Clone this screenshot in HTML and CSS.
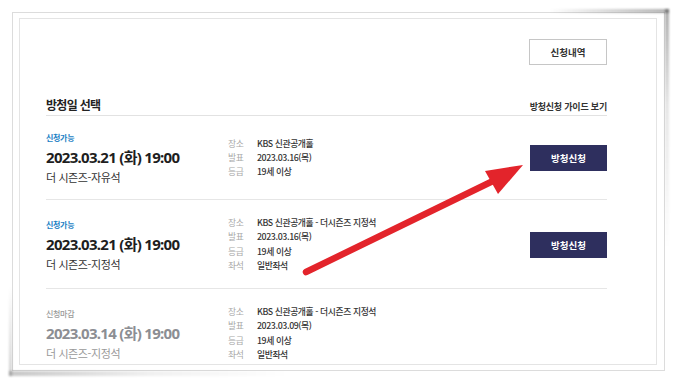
FILE: index.html
```html
<!DOCTYPE html>
<html lang="ko">
<head>
<meta charset="utf-8">
<link rel="stylesheet" href="styles.css">
</head>
<body>
<div class="frame">
  <span class="shadow shadow-top"></span>
  <span class="shadow shadow-right"></span>
  <span class="shadow shadow-bottom"></span>
  <span class="shadow shadow-left"></span>
  <div class="inner">
    <div class="content">
      <div class="top-bar">
        <button class="btn-history">신청내역</button>
      </div>
      <div class="section-head">
        <h2 class="section-title">방청일 선택</h2>
        <a class="guide-link">방청신청 가이드 보기</a>
      </div>

      <div class="row">
        <div class="when">
          <div class="status">신청가능</div>
          <div class="date">2023.03.21 (화) 19:00</div>
          <div class="seat">더 시즌즈-자유석</div>
        </div>
        <dl class="info">
          <dt>장소</dt><dd>KBS 신관공개홀</dd>
          <dt>발표</dt><dd>2023.03.16(목)</dd>
          <dt>등급</dt><dd>19세 이상</dd>
        </dl>
        <button class="btn-apply">방청신청</button>
      </div>

      <div class="row">
        <div class="when">
          <div class="status">신청가능</div>
          <div class="date">2023.03.21 (화) 19:00</div>
          <div class="seat">더 시즌즈-지정석</div>
        </div>
        <dl class="info">
          <dt>장소</dt><dd>KBS 신관공개홀 - 더시즌즈 지정석</dd>
          <dt>발표</dt><dd>2023.03.16(목)</dd>
          <dt>등급</dt><dd>19세 이상</dd>
          <dt>좌석</dt><dd>일반좌석</dd>
        </dl>
        <button class="btn-apply">방청신청</button>
      </div>

      <div class="row closed">
        <div class="when">
          <div class="status">신청마감</div>
          <div class="date">2023.03.14 (화) 19:00</div>
          <div class="seat">더 시즌즈-지정석</div>
        </div>
        <dl class="info">
          <dt>장소</dt><dd>KBS 신관공개홀 - 더시즌즈 지정석</dd>
          <dt>발표</dt><dd>2023.03.09(목)</dd>
          <dt>등급</dt><dd>19세 이상</dd>
          <dt>좌석</dt><dd>일반좌석</dd>
        </dl>
        <span class="btn-placeholder"></span>
      </div>
    </div>
  </div>
</div>
<svg class="arrow" width="676" height="384" viewBox="0 0 676 384">
  <line x1="306" y1="272" x2="495" y2="180" stroke="#e3242b" stroke-width="6.5" stroke-linecap="round"/>
  <polygon points="523,165 485,171 498,194" fill="#e3242b"/>
</svg>
</body>
</html>
```

FILE: styles.css
```css
* { box-sizing: border-box; }

html, body {
  margin: 0;
  padding: 0;
  background: #fff;
}

body {
  width: 676px;
  height: 384px;
  overflow: hidden;
  font-family: "Noto Sans CJK KR", "Noto Sans", sans-serif;
  color: #333;
}

.frame {
  position: relative;
  margin: 12px 0 0 12px;
  width: 653px;
  height: 359px;
  border: 1px solid #dcdcdc;
  background: #fff;
  padding: 5px 7px 5px 6px;
}

.shadow {
  position: absolute;
  pointer-events: none;
  filter: blur(1px);
}

.shadow-top {
  top: -4px;
  right: -5px;
  width: 120px;
  height: 4px;
  background: linear-gradient(to right, rgba(0,0,0,0), rgba(0,0,0,0.3));
}

.shadow-right {
  top: -4px;
  right: -5px;
  width: 4px;
  height: 240px;
  background: linear-gradient(to bottom, rgba(0,0,0,0.32), rgba(0,0,0,0.1) 40%, rgba(0,0,0,0));
}

.shadow-bottom {
  bottom: -6px;
  left: -4px;
  width: 280px;
  height: 5px;
  background: linear-gradient(to right, rgba(0,0,0,0.22), rgba(0,0,0,0.06) 50%, rgba(0,0,0,0));
}

.shadow-left {
  bottom: -6px;
  left: -4px;
  width: 3px;
  height: 90px;
  background: linear-gradient(to top, rgba(0,0,0,0.18), rgba(0,0,0,0));
}

.inner {
  position: relative;
  height: 100%;
  border: 1px solid #e4e4e4;
  overflow: hidden;
  background: #fff;
}

.content {
  width: 561px;
  margin-left: 26px;
}

.top-bar {
  display: flex;
  justify-content: flex-end;
  padding-top: 20px;
}

.btn-history {
  width: 78px;
  height: 26px;
  border: 1px solid #c6c6c6;
  background: #fff;
  font-family: inherit;
  font-size: 9.5px;
  font-weight: 700;
  color: #333;
  padding: 0;
}

.section-head {
  display: flex;
  justify-content: space-between;
  align-items: baseline;
  margin-top: 31px;
  padding-bottom: 2px;
  border-bottom: 1px solid #e2e2e2;
}

.section-title {
  margin: 0;
  font-size: 12px;
  line-height: 17px;
  font-weight: 700;
  color: #222;
  letter-spacing: -0.7px;
}

.guide-link {
  font-size: 9px;
  font-weight: 700;
  color: #333;
  letter-spacing: -0.2px;
}

.row {
  display: grid;
  grid-template-columns: 182px 1fr 77px;
  align-items: center;
  padding: 16px 0 15px;
  border-bottom: 1px solid #e6e6e6;
}

.when {
  display: flex;
  flex-direction: column;
}

.status {
  font-size: 8px;
  line-height: 12px;
  font-weight: 700;
  color: #1b7fc4;
  letter-spacing: -0.3px;
}

.date {
  margin-top: 3px;
  font-family: "Noto Sans", "Noto Sans CJK KR", sans-serif;
  font-size: 15px;
  line-height: 20px;
  font-weight: 700;
  color: #1e1e1e;
  letter-spacing: -0.7px;
}

.seat {
  margin-top: 3px;
  font-size: 11px;
  line-height: 14px;
  color: #333;
  letter-spacing: -0.4px;
}

.info {
  display: grid;
  grid-template-columns: 29px 1fr;
  margin: 0;
  font-size: 8.8px;
  line-height: 14.3px;
  letter-spacing: -0.4px;
}

.info dt {
  color: #a8a8a8;
}

.info dd {
  margin: 0;
  color: #333;
  font-weight: 500;
}

.btn-apply {
  width: 77px;
  height: 26px;
  border: 0;
  padding: 0;
  background: #2e2f5e;
  color: #fff;
  font-family: inherit;
  font-size: 9.5px;
  font-weight: 700;
}

.closed .status { color: #9a9a9a; font-weight: 500; }
.closed .date { color: #8c8e93; }
.closed .seat { color: #999; }

.arrow {
  position: absolute;
  top: 0;
  left: 0;
  pointer-events: none;
}
```
